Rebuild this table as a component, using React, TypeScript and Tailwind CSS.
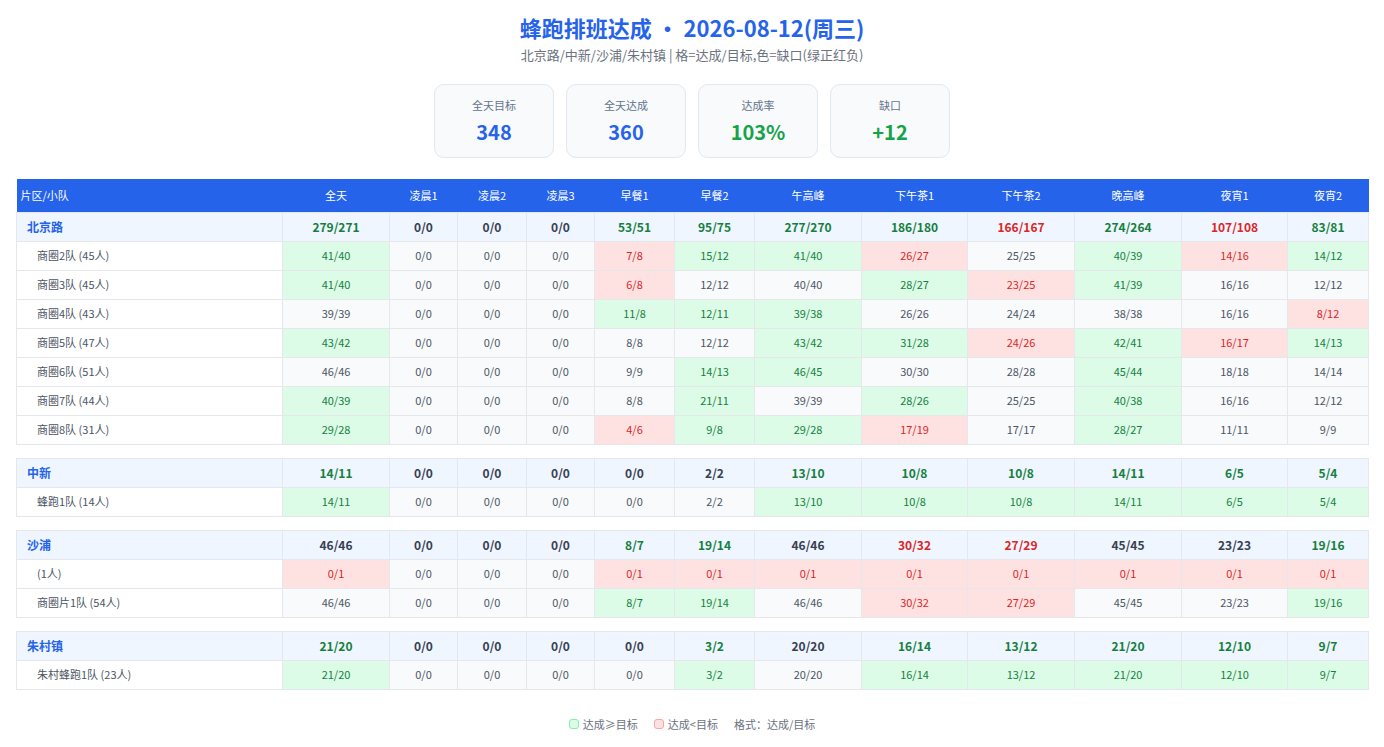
import React from "react";

type Row = { name: string; vals: string[] };
type Group = { name: string; total: string[]; rows: Row[] };

const cols = ["全天", "凌晨1", "凌晨2", "凌晨3", "早餐1", "早餐2", "午高峰", "下午茶1", "下午茶2", "晚高峰", "夜宵1", "夜宵2"];
const widths = ["w-[266px]", "w-[107px]", "w-[68px]", "w-[69px]", "w-[68px]", "w-[80px]", "w-[80px]", "w-[107px]", "w-[106px]", "w-[107px]", "w-[107px]", "w-[106px]", "w-[81px]"];

const s = (t: string) => t.split(" ");

const groups: Group[] = [
  {
    name: "北京路",
    total: s("279/271 0/0 0/0 0/0 53/51 95/75 277/270 186/180 166/167 274/264 107/108 83/81"),
    rows: [
      { name: "商圈2队 (45人)", vals: s("41/40 0/0 0/0 0/0 7/8 15/12 41/40 26/27 25/25 40/39 14/16 14/12") },
      { name: "商圈3队 (45人)", vals: s("41/40 0/0 0/0 0/0 6/8 12/12 40/40 28/27 23/25 41/39 16/16 12/12") },
      { name: "商圈4队 (43人)", vals: s("39/39 0/0 0/0 0/0 11/8 12/11 39/38 26/26 24/24 38/38 16/16 8/12") },
      { name: "商圈5队 (47人)", vals: s("43/42 0/0 0/0 0/0 8/8 12/12 43/42 31/28 24/26 42/41 16/17 14/13") },
      { name: "商圈6队 (51人)", vals: s("46/46 0/0 0/0 0/0 9/9 14/13 46/45 30/30 28/28 45/44 18/18 14/14") },
      { name: "商圈7队 (44人)", vals: s("40/39 0/0 0/0 0/0 8/8 21/11 39/39 28/26 25/25 40/38 16/16 12/12") },
      { name: "商圈8队 (31人)", vals: s("29/28 0/0 0/0 0/0 4/6 9/8 29/28 17/19 17/17 28/27 11/11 9/9") },
    ],
  },
  {
    name: "中新",
    total: s("14/11 0/0 0/0 0/0 0/0 2/2 13/10 10/8 10/8 14/11 6/5 5/4"),
    rows: [{ name: "蜂跑1队 (14人)", vals: s("14/11 0/0 0/0 0/0 0/0 2/2 13/10 10/8 10/8 14/11 6/5 5/4") }],
  },
  {
    name: "沙浦",
    total: s("46/46 0/0 0/0 0/0 8/7 19/14 46/46 30/32 27/29 45/45 23/23 19/16"),
    rows: [
      { name: "(1人)", vals: s("0/1 0/0 0/0 0/0 0/1 0/1 0/1 0/1 0/1 0/1 0/1 0/1") },
      { name: "商圈片1队 (54人)", vals: s("46/46 0/0 0/0 0/0 8/7 19/14 46/46 30/32 27/29 45/45 23/23 19/16") },
    ],
  },
  {
    name: "朱村镇",
    total: s("21/20 0/0 0/0 0/0 0/0 3/2 20/20 16/14 13/12 21/20 12/10 9/7"),
    rows: [{ name: "朱村蜂跑1队 (23人)", vals: s("21/20 0/0 0/0 0/0 0/0 3/2 20/20 16/14 13/12 21/20 12/10 9/7") }],
  },
];

function status(v: string) {
  const [a, b] = v.split("/").map(Number);
  if (a > b) return "up";
  if (a < b) return "down";
  return "eq";
}

const cellBase = "border border-[#e5e7eb] text-center p-0";

function SubCell({ v }: { v: string }) {
  const st = status(v);
  const cls =
    st === "up"
      ? "bg-[#dcfce7] text-[#15803d]"
      : st === "down"
      ? "bg-[#fee2e2] text-[#dc2626]"
      : "bg-[#f9fafb] text-[#4b5563]";
  return <td className={`${cellBase} h-[29px] text-[11px] ${cls}`}>{v}</td>;
}

function GroupCell({ v }: { v: string }) {
  const st = status(v);
  const cls = st === "up" ? "text-[#15803d]" : st === "down" ? "text-[#dc2626]" : "text-[#374151]";
  return <td className={`${cellBase} h-[29px] text-[12px] font-bold bg-[#eff6ff] ${cls}`}>{v}</td>;
}

function Card({ label, value, color }: { label: string; value: string; color: string }) {
  return (
    <div className="w-[120px] rounded-[10px] border border-[#e2e8f0] bg-[#f8fafc] pt-3 pb-[11px] flex flex-col items-center">
      <div className="text-[11px] leading-4 text-[#64748b]">{label}</div>
      <div className={`mt-[5px] text-[20px] leading-7 font-bold ${color}`}>{value}</div>
    </div>
  );
}

export default function App() {
  return (
    <div className="min-h-[747px] bg-white px-4 pt-[13px] [font-family:'Noto_Sans_CJK_SC','Noto_Sans',sans-serif]">
      <h1 className="text-center text-[22px] leading-7 font-bold text-[#2563eb]">
        蜂跑排班达成 · 2026-08-12(周三)
      </h1>
      <div className="mt-1 text-center text-[13px] leading-5 text-[#6b7280]">
        北京路/中新/沙浦/朱村镇 | 格=达成/目标,色=缺口(绿正红负)
      </div>
      <div className="mt-[19px] flex justify-center gap-3">
        <Card label="全天目标" value="348" color="text-[#2563eb]" />
        <Card label="全天达成" value="360" color="text-[#2563eb]" />
        <Card label="达成率" value="103%" color="text-[#16a34a]" />
        <Card label="缺口" value="+12" color="text-[#16a34a]" />
      </div>
      <table className="mt-[21px] w-[1352px] table-fixed border-collapse">
        <colgroup>
          {widths.map((w, i) => (
            <col key={i} className={w} />
          ))}
        </colgroup>
        <thead>
          <tr className="bg-[#2563eb] text-white">
            <th className="h-[33px] p-0 pl-1 text-left text-[11px] font-normal">片区/小队</th>
            {cols.map((c) => (
              <th key={c} className="h-[33px] p-0 text-center text-[11px] font-normal">
                {c}
              </th>
            ))}
          </tr>
        </thead>
        <tbody>
          {groups.map((g, gi) => (
            <React.Fragment key={g.name}>
              {gi > 0 && (
                <tr>
                  <td colSpan={13} className="h-[14px] p-0 border-0"></td>
                </tr>
              )}
              <tr>
                <td className="border border-[#e5e7eb] bg-[#eff6ff] h-[29px] p-0 pl-[10px] text-left text-[12px] font-bold text-[#2563eb]">
                  {g.name}
                </td>
                {g.total.map((v, i) => (
                  <GroupCell key={i} v={v} />
                ))}
              </tr>
              {g.rows.map((r) => (
                <tr key={r.name}>
                  <td className="border border-[#e5e7eb] bg-white h-[29px] p-0 pl-5 text-left text-[11px] text-[#4b5563]">
                    {r.name}
                  </td>
                  {r.vals.map((v, i) => (
                    <SubCell key={i} v={v} />
                  ))}
                </tr>
              ))}
            </React.Fragment>
          ))}
        </tbody>
      </table>
      <div className="mt-[26px] flex justify-center items-center gap-4 text-[11px] text-[#6b7280]">
        <div className="flex items-center gap-1">
          <span className="inline-block w-[10px] h-[10px] rounded-[3px] border border-[#86efac] bg-[#dcfce7]"></span>
          <span>达成≥目标</span>
        </div>
        <div className="flex items-center gap-1">
          <span className="inline-block w-[10px] h-[10px] rounded-[3px] border border-[#fca5a5] bg-[#fee2e2]"></span>
          <span>达成&lt;目标</span>
        </div>
        <div>格式：达成/目标</div>
      </div>
    </div>
  );
}
